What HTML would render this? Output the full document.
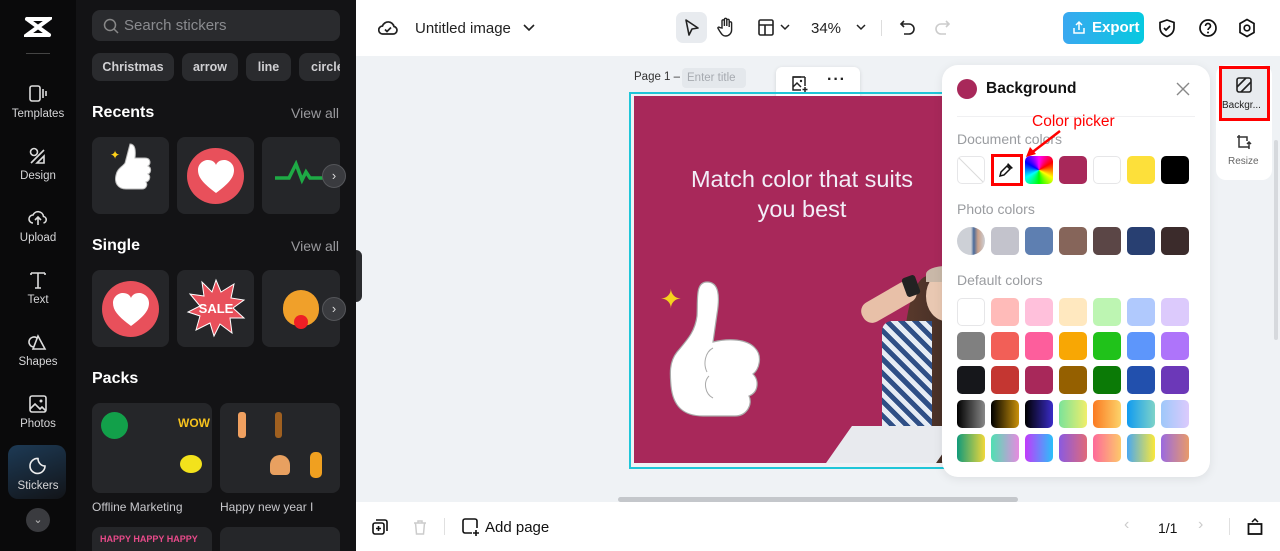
<!DOCTYPE html>
<html style="height:551px;overflow:hidden"><head><meta charset="utf-8"><style>
*{box-sizing:border-box;margin:0;padding:0}
body{width:1280px;height:551px;overflow:hidden;font-family:"Liberation Sans",sans-serif;background:#eff2f5;position:relative}
.a{position:absolute}
.nav{left:0;top:0;width:76px;height:551px;background:#0a0a0b}
.ni{position:absolute;left:0;width:76px;text-align:center;color:#d6d6d8;font-size:11.5px}
.ni svg{display:block;margin:0 auto 4px}
.pan{left:76px;top:0;width:280px;height:551px;background:#131315;overflow:hidden}
.chip{position:absolute;top:53px;height:28px;border-radius:8px;background:#2a2b2e;color:#d0d0d3;font-size:12.5px;font-weight:bold;line-height:28px;text-align:center}
.h{position:absolute;left:92px;color:#fff;font-weight:bold;font-size:16px}
.va{position:absolute;right:16px;color:#9a9a9e;font-size:14px}
.tile{position:absolute;width:77px;height:77px;border-radius:8px;background:#252629}
.pk{position:absolute;width:120px;height:90px;border-radius:8px;background:#252629}
.arr{position:absolute;width:24px;height:24px;border-radius:12px;background:#3a3b3f;border:1px solid #55565a;color:#ddd;font-size:13px;text-align:center;line-height:21px}
.top{left:356px;top:0;width:924px;height:56px;background:#fff}
.bot{left:356px;top:502px;width:924px;height:49px;background:#fff}
.sw{position:absolute;width:28px;height:28px;border-radius:5px}
.lbl{position:absolute;left:15px;color:#9a9ca0;font-size:14px}
</style></head><body>
<div class="a nav">
 <svg class="a" style="left:24px;top:16px" width="28" height="22" viewBox="0 0 28 22"><path d="M3 3 L25 3 L3 19 L25 19 M3 3 L25 19 M3 19 L25 3" stroke="#fff" stroke-width="4" fill="none" stroke-linecap="round"/></svg>
 <div class="a" style="left:26px;top:53px;width:24px;height:1px;background:#444"></div>
 <div class="ni" style="top:84px"><svg width="22" height="20" viewBox="0 0 22 20"><rect x="3" y="2" width="10" height="15" rx="2" stroke="#ddd" stroke-width="1.6" fill="none"/><path d="M16 5v9M19 7v5" stroke="#ddd" stroke-width="1.6"/></svg>Templates</div>
 <div class="ni" style="top:146px"><svg width="22" height="20" viewBox="0 0 22 20"><circle cx="7" cy="6" r="3.5" stroke="#ddd" stroke-width="1.6" fill="none"/><path d="M4 17 L17 4 M10 17 l7-7 v7z" stroke="#ddd" stroke-width="1.6" fill="none"/></svg>Design</div>
 <div class="ni" style="top:208px"><svg width="22" height="20" viewBox="0 0 22 20"><path d="M6 15a4 4 0 010-8 5.5 5.5 0 0110.5 1.5 3.3 3.3 0 010 6.5M11 17V9M8 12l3-3 3 3" stroke="#ddd" stroke-width="1.6" fill="none"/></svg>Upload</div>
 <div class="ni" style="top:270px"><svg width="22" height="20" viewBox="0 0 22 20"><path d="M4 3h14M4 3v2M18 3v2M11 3v15M8 18h6" stroke="#ddd" stroke-width="1.6" fill="none"/></svg>Text</div>
 <div class="ni" style="top:332px"><svg width="22" height="20" viewBox="0 0 22 20"><path d="M10 6a5 5 0 10-3 9M11 4l7 13H6z" stroke="#ddd" stroke-width="1.6" fill="none"/></svg>Shapes</div>
 <div class="ni" style="top:394px"><svg width="22" height="20" viewBox="0 0 22 20"><rect x="3" y="2" width="16" height="16" rx="2" stroke="#ddd" stroke-width="1.6" fill="none"/><path d="M3 15l5-5 5 5 2-2 4 4" stroke="#ddd" stroke-width="1.6" fill="none"/><circle cx="14" cy="7" r="1.5" fill="#ddd"/></svg>Photos</div>
 <div class="a" style="left:8px;top:445px;width:58px;height:54px;border-radius:10px;background:linear-gradient(160deg,#1d3a55,#121418)"></div>
 <div class="ni" style="top:456px"><svg width="22" height="20" viewBox="0 0 22 20"><path d="M18 10a7.5 7.5 0 11-7-7.5c0 4 3 7.5 7 7.5zM11 2.5c0 4 3 7.5 7 7.5" stroke="#eee" stroke-width="1.6" fill="none"/></svg>Stickers</div>
 <div class="a" style="left:26px;top:508px;width:24px;height:24px;border-radius:12px;background:#3a3b3f;color:#bbb;font-size:11px;text-align:center;line-height:24px">&#8964;</div>
</div>
<div class="a pan">
 <div class="a" style="left:16px;top:10px;width:248px;height:31px;border-radius:8px;background:#2a2b2e;color:#8a8b8f;font-size:15px;line-height:31px;padding-left:32px">Search stickers</div>
 <svg class="a" style="left:27px;top:18px" width="16" height="16" viewBox="0 0 16 16"><circle cx="7" cy="7" r="5.5" stroke="#888" stroke-width="1.5" fill="none"/><path d="M11 11l4 4" stroke="#888" stroke-width="1.5"/></svg>
 <div class="a" style="left:16px;top:527px;width:120px;height:24px;border-radius:8px 8px 0 0;background:#252629"></div>
 <div class="a" style="left:144px;top:527px;width:120px;height:24px;border-radius:8px 8px 0 0;background:#252629"></div>
 <div class="a" style="left:24px;top:533px;color:#e84a8a;font-size:9px;font-weight:bold;line-height:12px">HAPPY HAPPY HAPPY</div>
</div>
<div class="chip" style="left:92px;width:82px">Christmas</div>
<div class="chip" style="left:182px;width:56px">arrow</div>
<div class="chip" style="left:246px;width:45px">line</div>
<div class="chip" style="left:299px;width:41px;text-align:left;padding-left:12px;overflow:hidden">circle</div>
<div class="h" style="top:104px">Recents</div><div class="va" style="top:105px;left:291px">View all</div>
<div class="tile" style="left:92px;top:137px"></div><div class="tile" style="left:177px;top:137px"></div><div class="tile" style="left:262px;top:137px;width:78px"></div>
<div class="a" style="left:110px;top:148px;color:#ffd21a;font-size:12px">&#10022;</div>
<svg class="a" style="left:108px;top:140px" width="48" height="58" viewBox="0 0 48 58"><path d="M22 4c5 0 6 6 5 14l10 0c6 0 6 6 3 8 4 2 3 7 0 8 3 2 2 7-2 8 2 3 0 7-4 7H18c-8 0-12-6-10-14 1-6 6-8 9-12z" fill="#fff" stroke="#bbb"/></svg>
<div class="a" style="left:187px;top:148px;width:57px;height:56px;border-radius:50%;background:#e8505b"></div>
<svg class="a" style="left:196px;top:159px" width="40" height="36" viewBox="0 0 40 36"><path d="M20 34C8 25 2 19 2 11 2 5 7 1 12 1c4 0 7 2 8 5 1-3 4-5 8-5 5 0 10 4 10 10 0 8-6 14-18 23z" fill="#fff"/></svg>
<svg class="a" style="left:273px;top:160px" width="60" height="30" viewBox="0 0 60 30"><path d="M2 18h14l7-14 6 16 4-8 4 6h20" stroke="#1eaa45" stroke-width="3.5" fill="none"/></svg>
<div class="arr" style="left:322px;top:164px">&#8250;</div>
<div class="h" style="top:237px">Single</div><div class="va" style="top:238px;left:291px">View all</div>
<div class="tile" style="left:92px;top:270px"></div><div class="tile" style="left:177px;top:270px"></div><div class="tile" style="left:262px;top:270px;width:78px"></div>
<div class="a" style="left:102px;top:281px;width:57px;height:56px;border-radius:50%;background:#e8505b"></div>
<svg class="a" style="left:111px;top:292px" width="40" height="36" viewBox="0 0 40 36"><path d="M20 34C8 25 2 19 2 11 2 5 7 1 12 1c4 0 7 2 8 5 1-3 4-5 8-5 5 0 10 4 10 10 0 8-6 14-18 23z" fill="#fff"/></svg>
<svg class="a" style="left:186px;top:278px" width="60" height="60" viewBox="0 0 60 60"><polygon points="30,2 35,14 48,6 45,20 58,22 47,30 58,40 44,40 46,55 34,46 28,58 24,45 10,52 14,38 2,34 14,28 4,16 18,18 16,4 26,14" fill="#e8505b" stroke="#fff" stroke-width="1"/><text x="30" y="35" font-size="13" font-weight="bold" fill="#fff" text-anchor="middle" font-family="Liberation Sans">SALE</text></svg>
<div class="a" style="left:283px;top:290px;width:36px;height:36px;border-radius:50% 50% 45% 45%;background:#f0a02a"></div>
<div class="a" style="left:294px;top:315px;width:14px;height:14px;border-radius:50%;background:#ee1f25"></div>
<div class="arr" style="left:322px;top:297px">&#8250;</div>
<div class="h" style="top:370px">Packs</div>
<div class="pk" style="left:92px;top:403px"></div><div class="pk" style="left:220px;top:403px"></div>
<div class="a" style="left:101px;top:412px;width:27px;height:27px;border-radius:50%;background:#12a04a"></div>
<div class="a" style="left:178px;top:416px;color:#f7c31d;font-weight:bold;font-size:12px">WOW</div>
<div class="a" style="left:180px;top:455px;width:22px;height:18px;background:#f3e21c;border-radius:50%"></div>
<div class="a" style="left:238px;top:412px;width:8px;height:26px;background:#f0a060;border-radius:3px"></div>
<div class="a" style="left:275px;top:412px;width:7px;height:26px;background:#a06020;border-radius:3px"></div>
<div class="a" style="left:310px;top:452px;width:12px;height:26px;background:#f0a020;border-radius:5px"></div>
<div class="a" style="left:270px;top:455px;width:20px;height:20px;background:#e8a060;border-radius:50% 50% 4px 4px"></div>
<div class="a" style="left:92px;top:500px;color:#c8c8cc;font-size:12px">Offline Marketing</div>
<div class="a" style="left:220px;top:500px;color:#c8c8cc;font-size:12px">Happy new year I</div>
<div class="a" style="left:356px;top:250px;width:6px;height:52px;background:#2a2b2e;border-radius:0 6px 6px 0"></div>

<div class="a top">
 <svg class="a" style="left:22px;top:18px" width="20" height="20" viewBox="0 0 20 20"><path d="M5 16a4 4 0 01-.5-8A6 6 0 0116 8.5 3.8 3.8 0 0115 16z" stroke="#222" stroke-width="1.7" fill="none"/><path d="M7 11.5l2 2 4-4" stroke="#222" stroke-width="1.7" fill="none"/></svg>
 <div class="a" style="left:59px;top:20px;font-size:15px;color:#222">Untitled image</div>
 <svg class="a" style="left:167px;top:24px" width="12" height="8" viewBox="0 0 12 8"><path d="M1 1l5 5 5-5" stroke="#222" stroke-width="1.6" fill="none"/></svg>
 <div class="a" style="left:320px;top:12px;width:31px;height:31px;border-radius:7px;background:#e8ebef"></div>
 <svg class="a" style="left:328px;top:18px" width="16" height="20" viewBox="0 0 16 20"><path d="M2 2l12 8-6 1-3 6z" stroke="#222" stroke-width="1.6" fill="none" stroke-linejoin="round"/></svg>
 <svg class="a" style="left:361px;top:17px" width="18" height="20" viewBox="0 0 18 20"><path d="M5 11V4a1.2 1.2 0 012.4 0v5V2.5a1.2 1.2 0 012.4 0V9V3.5a1.2 1.2 0 012.4 0V10V6a1.2 1.2 0 012.4 0v7a6 6 0 01-6 6c-3 0-4-2-6-5l-1.5-2.5c-.6-1 .6-2 1.5-1z" stroke="#222" stroke-width="1.4" fill="none"/></svg>
 <svg class="a" style="left:402px;top:19px" width="16" height="17" viewBox="0 0 16 17"><rect x="1" y="1" width="14" height="15" rx="1.5" stroke="#222" stroke-width="1.6" fill="none"/><path d="M1 6h14M7 6v10" stroke="#222" stroke-width="1.6"/></svg>
 <svg class="a" style="left:424px;top:24px" width="10" height="7" viewBox="0 0 10 7"><path d="M1 1l4 4 4-4" stroke="#222" stroke-width="1.5" fill="none"/></svg>
 <div class="a" style="left:455px;top:20px;font-size:15px;color:#222">34%</div>
 <svg class="a" style="left:500px;top:24px" width="10" height="7" viewBox="0 0 10 7"><path d="M1 1l4 4 4-4" stroke="#222" stroke-width="1.5" fill="none"/></svg>
 <div class="a" style="left:525px;top:20px;width:1px;height:16px;background:#ddd"></div>
 <svg class="a" style="left:543px;top:19px" width="17" height="17" viewBox="0 0 17 17"><path d="M5 2L2 5l3 3M2 5h8a5 5 0 010 10H5" stroke="#222" stroke-width="1.6" fill="none"/></svg>
 <svg class="a" style="left:578px;top:19px" width="17" height="17" viewBox="0 0 17 17"><path d="M12 2l3 3-3 3M15 5H7a5 5 0 000 10h5" stroke="#ccc" stroke-width="1.6" fill="none"/></svg>
 <div class="a" style="left:707px;top:12px;width:81px;height:32px;border-radius:6px;background:linear-gradient(90deg,#3aa8f0,#06c9e0);color:#fff;font-weight:bold;font-size:15px;line-height:32px;padding-left:29px">Export</div>
 <svg class="a" style="left:716px;top:20px" width="14" height="15" viewBox="0 0 14 15"><path d="M7 10V2M4 5l3-3 3 3M2 8v5h10V8" stroke="#fff" stroke-width="1.5" fill="none"/></svg>
 <svg class="a" style="left:802px;top:18px" width="18" height="20" viewBox="0 0 18 20"><path d="M9 2l7 2.5v5c0 4.5-3 7.5-7 9-4-1.5-7-4.5-7-9v-5z" stroke="#111" stroke-width="1.7" fill="none"/><path d="M6 10l2 2 4-4" stroke="#111" stroke-width="1.7" fill="none"/></svg>
 <svg class="a" style="left:842px;top:18px" width="20" height="20" viewBox="0 0 20 20"><circle cx="10" cy="10" r="8" stroke="#111" stroke-width="1.7" fill="none"/><path d="M7.5 8a2.5 2.5 0 015 0c0 2-2.5 2-2.5 4" stroke="#111" stroke-width="1.7" fill="none"/><circle cx="10" cy="14.5" r="1" fill="#111"/></svg>
 <svg class="a" style="left:882px;top:18px" width="18" height="20" viewBox="0 0 18 20"><path d="M9 1.5l7 4v9l-7 4-7-4v-9z" stroke="#111" stroke-width="1.7" fill="none"/><circle cx="9" cy="10" r="2.8" stroke="#111" stroke-width="1.7" fill="none"/></svg>
</div>

<div class="a" style="left:634px;top:71px;font-size:11.5px;color:#333">Page 1 –</div>
<div class="a" style="left:682px;top:68px;width:64px;height:20px;border-radius:4px;background:#e4e8ec;color:#a6aab0;font-size:11.5px;line-height:20px;padding-left:5px">Enter title</div>
<div class="a" style="left:776px;top:67px;width:84px;height:34px;border-radius:6px;background:#fff;box-shadow:0 1px 4px rgba(0,0,0,.12)"></div>
<svg class="a" style="left:791px;top:75px" width="18" height="18" viewBox="0 0 18 18"><path d="M10 2H2v13h8M2 12l4-4 4 4" stroke="#222" stroke-width="1.5" fill="none"/><path d="M14 2v9M2 2h12" stroke="#222" stroke-width="1.5"/><circle cx="10" cy="6" r="1.2" fill="#222"/><path d="M14 12v5M11.5 14.5h5" stroke="#222" stroke-width="1.5"/></svg>
<div class="a" style="left:827px;top:74px;font-size:16px;color:#222;font-weight:bold;letter-spacing:1px;line-height:12px">···</div>

<div class="a" style="left:629px;top:92px;width:320px;height:377px;border:2px solid #1fc6d8"></div>
<div class="a" style="left:634px;top:96px;width:310px;height:367px;background:#a8285a;overflow:hidden">
 <div class="a" style="left:38px;top:68px;width:260px;text-align:center;color:#f2eef8;font-size:23.5px;line-height:30px">Match color that suits you best</div>
 <div class="a" style="left:26px;top:188px;color:#f5d21e;font-size:26px">&#10022;</div>
 <svg class="a" style="left:25px;top:180px" width="115" height="150" viewBox="0 0 115 150"><path d="M48 6c12 0 13 14 10 32l-4 28c16-4 34-3 42 6 8 8 4 22-2 26 6 6 6 18-4 22 4 8-2 20-14 20H44c-20 0-30-10-32-30-1-12-2-24 6-34 10-12 18-20 20-36 1-16-2-34 10-34z" fill="#fff" stroke="#aaa" stroke-width="1.2"/><path d="M54 72c-8 4-10 16-6 24M50 100c-6 6-4 18 4 22" stroke="#aaa" fill="none"/></svg>
 <div class="a" style="left:270px;top:180px;width:60px;height:200px;background:linear-gradient(90deg,#5a3a2c,#3c2a24);border-radius:40% 0 0 0"></div>
 <div class="a" style="left:225px;top:195px;width:60px;height:22px;background:#e8c0a8;border-radius:10px;transform:rotate(-30deg)"></div>
 <div class="a" style="left:270px;top:180px;width:14px;height:20px;background:#222;border-radius:3px;transform:rotate(-20deg)"></div>
 <div class="a" style="left:292px;top:175px;width:40px;height:50px;border-radius:50%;background:#e9c8b2"></div>
 <div class="a" style="left:292px;top:170px;width:40px;height:16px;border-radius:50% 50% 0 0;background:#c9b8a8"></div>
 <div class="a" style="left:248px;top:225px;width:50px;height:140px;background:repeating-linear-gradient(45deg,#2f4f86 0 5px,#e6ecf4 5px 10px);border-radius:10px 0 0 0"></div>
 <div class="a" style="left:205px;top:330px;width:110px;height:37px;background:#e8eaee;transform:skewX(-35deg)"></div>
</div>

<div class="a" style="left:618px;top:497px;width:400px;height:5px;border-radius:3px;background:#c4c7cb"></div>

<div class="a" style="left:942px;top:65px;width:268px;height:412px;border-radius:16px;background:#fff;box-shadow:0 2px 10px rgba(0,0,0,.08)">
 <div class="a" style="left:15px;top:14px;width:20px;height:20px;border-radius:50%;background:#a8285a"></div>
 <div class="a" style="left:44px;top:15px;font-size:15.5px;font-weight:bold;color:#111">Background</div>
 <svg class="a" style="left:234px;top:17px" width="14" height="14" viewBox="0 0 14 14"><path d="M1 1l12 12M13 1L1 13" stroke="#888" stroke-width="1.4"/></svg>
 <div class="a" style="left:15px;top:51px;width:238px;height:1px;background:#f0f0f2"></div>
 <div class="lbl" style="top:66px">Document colors</div>
 <div class="lbl" style="top:136px">Photo colors</div>
 <div class="lbl" style="top:207px">Default colors</div>
 <div class="a" style="left:90px;top:48px;color:#f00;font-size:15.5px">Color picker</div>
 <svg class="a" style="left:82px;top:64px" width="40" height="30" viewBox="0 0 40 30"><path d="M36 2L6 25" stroke="#f00" stroke-width="2.5"/><path d="M2 28l4-10 6 7z" fill="#f00"/></svg>
</div>
<div class="sw" style="left:957px;top:156px;border:1px solid #e6e6e8;background:linear-gradient(to top right,#fff 48%,#ddd 49%,#ddd 51%,#fff 52%)"></div>
<div class="a" style="left:991px;top:154px;width:32px;height:32px;border:3px solid #f00;background:#fff"></div>
<svg class="a" style="left:997px;top:161px" width="18" height="18" viewBox="0 0 18 18"><path d="M3 15l1-4 6-6 3 3-6 6z" stroke="#111" stroke-width="1.5" fill="none"/><path d="M11 2l5 5-2 1-4-4z" fill="#111"/></svg>
<div class="sw" style="left:1025px;top:156px;background:conic-gradient(#f0f,#f00,#ff0,#0f0,#0ff,#00f,#f0f)"></div>
<div class="sw" style="left:1059px;top:156px;background:#a8285a"></div>
<div class="sw" style="left:1093px;top:156px;background:#fff;border:1px solid #e6e6e8"></div>
<div class="sw" style="left:1127px;top:156px;background:#fde03a"></div>
<div class="sw" style="left:1161px;top:156px;background:#000"></div>
<div class="sw" style="left:957px;top:227px;border-radius:50%;background:linear-gradient(90deg,#cdd0d6 50%,#4a6a9a 60%,#c9a08a 75%,#cdd0d6)"></div>
<div class="sw" style="left:991px;top:227px;background:#c3c3cc"></div>
<div class="sw" style="left:1025px;top:227px;background:#5e7fb1"></div>
<div class="sw" style="left:1059px;top:227px;background:#86655a"></div>
<div class="sw" style="left:1093px;top:227px;background:#5b4646"></div>
<div class="sw" style="left:1127px;top:227px;background:#283f71"></div>
<div class="sw" style="left:1161px;top:227px;background:#3b2b2b"></div>

<div class="sw" style="left:957px;top:298px;background:#fff;border:1px solid #e6e6e8"></div>
<div class="sw" style="left:991px;top:298px;background:#ffbbb9"></div>
<div class="sw" style="left:1025px;top:298px;background:#ffc0db"></div>
<div class="sw" style="left:1059px;top:298px;background:#ffe8bf"></div>
<div class="sw" style="left:1093px;top:298px;background:#bdf5b2"></div>
<div class="sw" style="left:1127px;top:298px;background:#b0c9fd"></div>
<div class="sw" style="left:1161px;top:298px;background:#dccafc"></div>
<div class="sw" style="left:957px;top:332px;background:#808080"></div>
<div class="sw" style="left:991px;top:332px;background:#f25f57"></div>
<div class="sw" style="left:1025px;top:332px;background:#fd5e9c"></div>
<div class="sw" style="left:1059px;top:332px;background:#f8a704"></div>
<div class="sw" style="left:1093px;top:332px;background:#20c21a"></div>
<div class="sw" style="left:1127px;top:332px;background:#5d96fb"></div>
<div class="sw" style="left:1161px;top:332px;background:#ae74fa"></div>
<div class="sw" style="left:957px;top:366px;background:#16171b"></div>
<div class="sw" style="left:991px;top:366px;background:#c43631"></div>
<div class="sw" style="left:1025px;top:366px;background:#a8285a"></div>
<div class="sw" style="left:1059px;top:366px;background:#956000"></div>
<div class="sw" style="left:1093px;top:366px;background:#0b7a06"></div>
<div class="sw" style="left:1127px;top:366px;background:#2250ad"></div>
<div class="sw" style="left:1161px;top:366px;background:#6c38b8"></div>
<div class="sw" style="left:957px;top:400px;background:linear-gradient(90deg,#000,#888)"></div>
<div class="sw" style="left:991px;top:400px;background:linear-gradient(90deg,#000,#c8900a)"></div>
<div class="sw" style="left:1025px;top:400px;background:linear-gradient(90deg,#000,#3a2cc8)"></div>
<div class="sw" style="left:1059px;top:400px;background:linear-gradient(90deg,#7be39a,#f0ee6a)"></div>
<div class="sw" style="left:1093px;top:400px;background:linear-gradient(90deg,#fb7a22,#fcd36a)"></div>
<div class="sw" style="left:1127px;top:400px;background:linear-gradient(90deg,#119bf0,#7ed3c8)"></div>
<div class="sw" style="left:1161px;top:400px;background:linear-gradient(90deg,#9ec8fa,#dccafc)"></div>
<div class="sw" style="left:957px;top:434px;background:linear-gradient(90deg,#119a7a,#f0d83a)"></div>
<div class="sw" style="left:991px;top:434px;background:linear-gradient(90deg,#4fe0b2,#e68ae0)"></div>
<div class="sw" style="left:1025px;top:434px;background:linear-gradient(90deg,#c23afa,#2ac0fa)"></div>
<div class="sw" style="left:1059px;top:434px;background:linear-gradient(90deg,#8a5ae0,#e06a7a)"></div>
<div class="sw" style="left:1093px;top:434px;background:linear-gradient(90deg,#fd6a9a,#fdc86a)"></div>
<div class="sw" style="left:1127px;top:434px;background:linear-gradient(90deg,#4aa8f0,#fae83a)"></div>
<div class="sw" style="left:1161px;top:434px;background:linear-gradient(90deg,#9a6ae0,#e89a6a)"></div>

<div class="a" style="left:1216px;top:65px;width:56px;height:115px;border-radius:10px;background:#fff"></div>
<div class="a" style="left:1219px;top:66px;width:51px;height:55px;border:3px solid #f00;background:#e8ebef"></div>
<svg class="a" style="left:1236px;top:77px" width="16" height="16" viewBox="0 0 16 16"><rect x="1" y="1" width="14" height="14" rx="2" stroke="#222" stroke-width="1.6" fill="none"/><path d="M1 10L10 1M5 15L15 5" stroke="#222" stroke-width="1.6"/></svg>
<div class="a" style="left:1222px;top:100px;font-size:10px;color:#222">Backgr...</div>
<svg class="a" style="left:1236px;top:134px" width="16" height="16" viewBox="0 0 16 16"><path d="M3 1v12h10M1 3h10v4M13 8v7M11 10l2-2 2 2" stroke="#333" stroke-width="1.5" fill="none"/></svg>
<div class="a" style="left:1228px;top:156px;font-size:10px;color:#666">Resize</div>
<div class="a" style="left:1274px;top:140px;width:4px;height:200px;border-radius:2px;background:#d6d9dd"></div>

<div class="a bot">
 <svg class="a" style="left:16px;top:17px" width="16" height="16" viewBox="0 0 16 16"><rect x="1" y="4" width="11" height="11" rx="2" stroke="#111" stroke-width="1.6" fill="none"/><path d="M4 1h9a2 2 0 012 2v9" stroke="#111" stroke-width="1.6" fill="none"/><path d="M6.5 7v5M4 9.5h5" stroke="#111" stroke-width="1.6"/></svg>
 <svg class="a" style="left:57px;top:17px" width="14" height="16" viewBox="0 0 14 16"><path d="M1 4h12M5 4V2h4v2M2.5 4l1 11h7l1-11" stroke="#ccc" stroke-width="1.5" fill="none"/></svg>
 <div class="a" style="left:88px;top:16px;width:1px;height:17px;background:#e0e0e0"></div>
 <svg class="a" style="left:106px;top:16px" width="18" height="18" viewBox="0 0 18 18"><path d="M10 15H3a2 2 0 01-2-2V3a2 2 0 012-2h10a2 2 0 012 2v7" stroke="#111" stroke-width="1.6" fill="none"/><path d="M14 12v6M11 15h6" stroke="#111" stroke-width="1.6"/></svg>
 <div class="a" style="left:129px;top:17px;font-size:15px;color:#111">Add page</div>
 <div class="a" style="left:768px;top:14px;font-size:16px;color:#ccc">&#8249;</div>
 <div class="a" style="left:802px;top:18px;font-size:14px;color:#111">1/1</div>
 <div class="a" style="left:842px;top:14px;font-size:16px;color:#ccc">&#8250;</div>
 <div class="a" style="left:873px;top:16px;width:1px;height:17px;background:#e0e0e0"></div>
 <svg class="a" style="left:891px;top:14px" width="16" height="20" viewBox="0 0 16 20"><rect x="1.5" y="8" width="13" height="10" stroke="#111" stroke-width="1.8" fill="none"/><path d="M5 6l3-3 3 3" stroke="#111" stroke-width="1.5" fill="none"/></svg>
</div>
</body></html>
